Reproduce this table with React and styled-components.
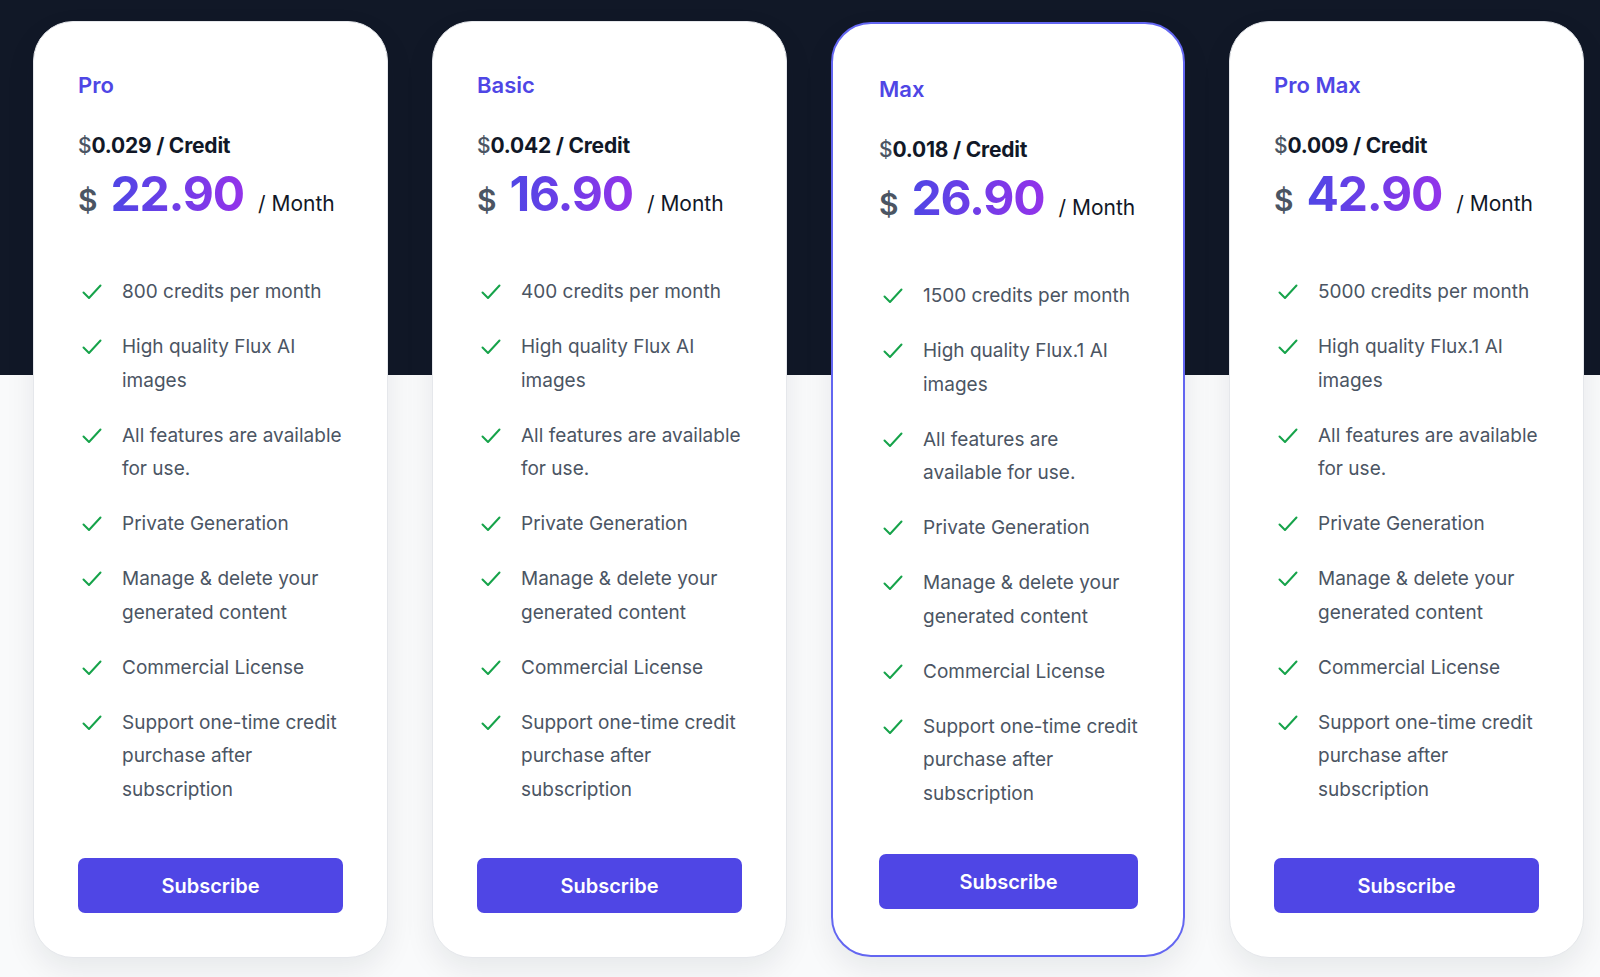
import React from 'react';
import styled, { createGlobalStyle, css } from 'styled-components';

const GlobalStyle = createGlobalStyle`
  html, body {
    margin: 0;
    padding: 0;
  }
  body {
    font-family: 'Inter', 'Noto Sans', sans-serif;
    -webkit-font-smoothing: antialiased;
  }
`;

const Page = styled.div`
  min-height: 100vh;
  overflow: hidden;
  background: linear-gradient(to bottom, #111827 0, #111827 375px, #f9fafb 375px);
`;

const Row = styled.div`
  display: flex;
  align-items: flex-start;
  gap: 44px;
  padding: 21px 0 0 33px;
`;

const Card = styled.div`
  box-sizing: border-box;
  flex: none;
  width: 355px;
  height: 937px;
  display: flex;
  flex-direction: column;
  background: #ffffff;
  border: 1px solid #e5e7eb;
  border-radius: 40px;
  padding: 49px 44px 44px;
  box-shadow: 0 12px 30px rgba(17, 24, 39, 0.08);

  ${({ $featured }) =>
    $featured &&
    css`
      width: 354px;
      height: 935px;
      margin-top: 1px;
      border: 2px solid #6366f1;
      padding: 51px 45px 46px 46px;
    `}
`;

const PlanName = styled.div`
  font-size: 22px;
  line-height: 28px;
  font-weight: 600;
  color: #4f46e5;
`;

const CreditPrice = styled.div`
  margin-top: 33px;
  font-size: 21px;
  line-height: 28px;
  font-weight: 700;
  letter-spacing: -0.2px;
  color: #111827;

  span {
    font-weight: 500;
    color: #4b5563;
  }
`;

const PriceRow = styled.div`
  margin-top: 10px;
  display: flex;
  align-items: baseline;
  white-space: nowrap;
`;

const Currency = styled.span`
  font-size: 30px;
  font-weight: 600;
  color: #4b5563;
  margin-right: 13px;
`;

const Amount = styled.span`
  font-size: 48px;
  line-height: 48px;
  font-weight: 700;
  letter-spacing: -1.2px;
  background: linear-gradient(90deg, #4f46e5 0%, #9333ea 100%);
  -webkit-background-clip: text;
  background-clip: text;
  color: transparent;
`;

const Period = styled.span`
  margin-left: 14px;
  font-size: 21px;
  font-weight: 400;
  color: #111827;
`;

const FeatureList = styled.ul`
  list-style: none;
  margin: 57px 0 0;
  padding: 0;
  display: flex;
  flex-direction: column;
  gap: 21.5px;
`;

const Feature = styled.li`
  display: flex;
  align-items: flex-start;
  font-size: 19px;
  line-height: 33.5px;
  color: #4b5563;
`;

const Check = styled.svg`
  flex: none;
  width: 20px;
  height: 16px;
  margin: 9px 20px 0 4px;
`;

const SubscribeButton = styled.button`
  margin-top: auto;
  height: 55px;
  width: 100%;
  border: none;
  border-radius: 7px;
  background: #4f46e5;
  color: #ffffff;
  font-family: inherit;
  font-size: 20px;
  font-weight: 600;
  cursor: pointer;
`;

const CheckIcon = () => (
  <Check viewBox="0 0 20 16" fill="none">
    <polyline
      points="1.5,8.5 7,14 18.5,1.5"
      stroke="#16a34a"
      strokeWidth="2"
      strokeLinecap="round"
      strokeLinejoin="round"
    />
  </Check>
);

const plans = [
  {
    name: 'Pro',
    credit: '0.029',
    price: '22.90',
    features: [
      '800 credits per month',
      'High quality Flux AI images',
      'All features are available for use.',
      'Private Generation',
      'Manage & delete your generated content',
      'Commercial License',
      'Support one-time credit purchase after subscription',
    ],
  },
  {
    name: 'Basic',
    credit: '0.042',
    price: '16.90',
    features: [
      '400 credits per month',
      'High quality Flux AI images',
      'All features are available for use.',
      'Private Generation',
      'Manage & delete your generated content',
      'Commercial License',
      'Support one-time credit purchase after subscription',
    ],
  },
  {
    name: 'Max',
    credit: '0.018',
    price: '26.90',
    featured: true,
    features: [
      '1500 credits per month',
      'High quality Flux.1 AI images',
      'All features are available for use.',
      'Private Generation',
      'Manage & delete your generated content',
      'Commercial License',
      'Support one-time credit purchase after subscription',
    ],
  },
  {
    name: 'Pro Max',
    credit: '0.009',
    price: '42.90',
    features: [
      '5000 credits per month',
      'High quality Flux.1 AI images',
      'All features are available for use.',
      'Private Generation',
      'Manage & delete your generated content',
      'Commercial License',
      'Support one-time credit purchase after subscription',
    ],
  },
];

const App = () => (
  <>
    <GlobalStyle />
    <Page>
      <Row>
        {plans.map((plan) => (
          <Card key={plan.name} $featured={plan.featured}>
            <PlanName>{plan.name}</PlanName>
            <CreditPrice>
              <span>$</span>
              {plan.credit} / Credit
            </CreditPrice>
            <PriceRow>
              <Currency>$</Currency>
              <Amount>{plan.price}</Amount>
              <Period>/ Month</Period>
            </PriceRow>
            <FeatureList>
              {plan.features.map((text) => (
                <Feature key={text}>
                  <CheckIcon />
                  <span>{text}</span>
                </Feature>
              ))}
            </FeatureList>
            <SubscribeButton>Subscribe</SubscribeButton>
          </Card>
        ))}
      </Row>
    </Page>
  </>
);

export default App;
